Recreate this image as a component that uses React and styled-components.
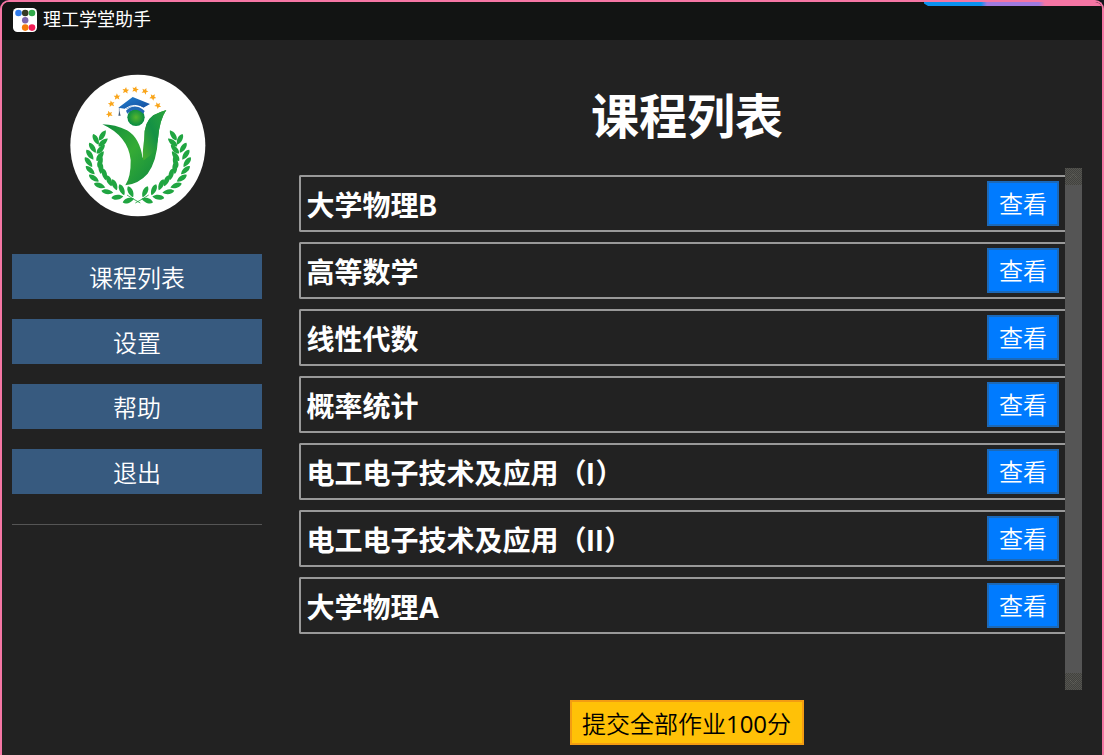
import React from "react";
import styled, { createGlobalStyle } from "styled-components";

const GlobalStyle = createGlobalStyle`
  * { box-sizing: border-box; }
  body {
    margin: 0;
    background: #14161d;
    font-family: "Noto Sans", "Noto Sans CJK SC", sans-serif;
    overflow: hidden;
  }
`;

const Window = styled.div`
  position: relative;
  width: 1104px;
  height: 755px;
  display: flex;
  flex-direction: column;
  border: 2px solid #f576a4;
  border-bottom: 0;
  border-radius: 9px 9px 0 0;
  background: #222222;
  overflow: hidden;
`;

const TitleBar = styled.header`
  flex: none;
  height: 38px;
  display: flex;
  align-items: flex-start;
  gap: 6px;
  padding: 5px 0 0 11px;
  background: #121413;
  color: #fff;
`;

const Title = styled.span`
  font: 400 18px/26px "Noto Sans CJK SC", sans-serif;
  margin-top: -2px;
`;

const Accent = styled.div`
  position: absolute;
  top: -2px;
  right: 0;
  width: 178px;
  height: 6px;
  background: linear-gradient(90deg, #0b92ee 0 57px, #a17be0 63px 115px, #f576a4 121px);
  clip-path: polygon(0 0, 100% 0, 100% 100%, 4px 100%, 0 60%);
`;

const Body = styled.div`
  flex: 1;
  display: flex;
  min-height: 0;
`;

const Sidebar = styled.nav`
  width: 250px;
  margin-left: 10px;
  display: flex;
  flex-direction: column;
  align-items: stretch;
`;

const LogoBox = styled.div`
  display: flex;
  justify-content: center;
  padding: 34px 0 0 1px;
  height: 214px;
`;

const NavButton = styled.button`
  height: 45px;
  flex: none;
  margin: 0 0 20px;
  padding: 0;
  border: 0;
  background: #375a7f;
  color: #fff;
  font: 350 24px/45px "Noto Sans CJK SC", sans-serif;
`;

const Divider = styled.hr`
  width: 100%;
  height: 1px;
  margin: 10px 0 0;
  border: 0;
  background: #555555;
`;

const Main = styled.main`
  width: 783px;
  margin-left: 37px;
  display: flex;
  flex-direction: column;
`;

const Heading = styled.h1`
  height: 128px;
  margin: 0;
  padding: 38px 7px 0 0;
  color: #fff;
  text-align: center;
  font: 700 48px/70px "Noto Sans CJK SC", sans-serif;
`;

const ListArea = styled.section`
  display: flex;
  height: 522px;
`;

const CourseList = styled.div`
  width: 766px;
  padding-top: 7px;
  display: flex;
  flex-direction: column;
  gap: 10px;
`;

const CourseRow = styled.div`
  height: 57px;
  display: flex;
  align-items: center;
  justify-content: space-between;
  padding: 0 6px 0 5.5px;
  border: 2px solid #999999;
  border-right: 0;
  border-radius: 2px 0 0 2px;
`;

const CourseName = styled.span`
  padding-top: 6px;
  color: #fff;
  white-space: nowrap;
  font: 700 28px/45px "Inter", "Noto Sans CJK SC", sans-serif;
`;

const Latin = styled.span`
  letter-spacing: 1px;
`;

const ViewButton = styled.button`
  width: 72px;
  height: 45px;
  margin-top: -1px;
  padding: 0 0 2px 0;
  border: 2px solid #1c69b8;
  background: #007bff;
  color: #fff;
  font: 350 24px/39px "Noto Sans CJK SC", sans-serif;
`;

const ScrollTrack = styled.div`
  width: 17px;
  display: flex;
  flex-direction: column;
  justify-content: space-between;
  background: #555555;
`;

const ScrollArrow = styled.div`
  height: 17px;
  background: repeating-conic-gradient(#42423f 0 25%, #555550 0 50%) 0 0 / 2px 2px;
`;

const SubmitButton = styled.button`
  align-self: center;
  width: 234px;
  height: 45px;
  margin: 10px 7px 0 0;
  padding: 1px 1px 0 0;
  border: 2px solid #f39c12;
  background: #ffc107;
  color: #000;
  white-space: nowrap;
  font: 350 24px/40px "Noto Sans CJK SC", sans-serif;
`;

const Digits = styled.span`
  font-family: "Open Sans", sans-serif;
  font-weight: 400;
`;

const LEAVES = [
  [126, 211, -62], [107, 223, 58], [97, 248, 52], [89, 269, 50], [85, 291, 48],
  [90, 315, 38], [101, 339, 30], [118, 361, 15], [141, 380, 5], [171, 396, -12],
  [204, 406, -25], [128, 232, -45], [121, 252, -52], [119, 273, -58], [119, 291, -75],
  [122, 309, 85], [133, 328, 72], [147, 347, 62], [163, 359, 62], [185, 374, 62], [211, 380, 60],
];

const STARS = [
  [147, 147], [153, 116], [170, 95], [196, 76], [225, 73], [254, 78], [278, 96], [293, 121],
];

const leafPath = "M-18 -1C-11 -10 8 -9 18 2C8 10 -12 10 -18 -1Z";
const starPath = "M0-10 3-3 10-3 5 2 7 9 0 5-7 9-5 2-10-3-3-3Z";

const Laurel = () => (
  <g fill="#20a541">
    {LEAVES.map(([x, y, a]) => (
      <path key={`${x}-${y}`} d={leafPath} transform={`translate(${x} ${y}) rotate(${a})`} />
    ))}
    <path d="M240 414Q218 402 200 390" fill="none" stroke="#20a541" strokeWidth="2.500" />
  </g>
);

const SchoolLogo = () => (
  <svg width="136" height="143" viewBox="29 27 408 429">
    <defs>
      <linearGradient id="body" x1="0" y1="0" x2="1" y2="1">
        <stop offset="0" stopColor="#04843f" />
        <stop offset=".5" stopColor="#35ab35" />
        <stop offset="1" stopColor="#078343" />
      </linearGradient>
      <linearGradient id="wing" x1="0" y1="1" x2="1" y2="0">
        <stop offset="0" stopColor="#4ab02f" />
        <stop offset=".5" stopColor="#149145" />
        <stop offset="1" stopColor="#2ba43c" />
      </linearGradient>
      <linearGradient id="cap" x1="0" y1="0" x2="1" y2="1">
        <stop offset="0" stopColor="#2080d0" />
        <stop offset="1" stopColor="#164d9d" />
      </linearGradient>
      <radialGradient id="head">
        <stop offset="0" stopColor="#56b52d" />
        <stop offset="1" stopColor="#078b43" />
      </radialGradient>
    </defs>
    <ellipse cx="232.500" cy="241.500" rx="202.500" ry="212.500" fill="#fff" />
    <Laurel />
    <g transform="matrix(-1 0 0 1 465 0)"><Laurel /></g>
    {STARS.map(([x, y], i) => (
      <path key={x} d={starPath} fill="#f9a51b" transform={`translate(${x} ${y}) rotate(${-20 + i * 9})`} />
    ))}
    <path d="M126 178Q165 178 200 196Q238 218 247 280Q253 255 252 220Q251 170 279 151Q297 141 318 135Q298 163 293 221Q290 287 262 326Q236 356 195 361Q212 335 211 285Q203 213 126 178Z" fill="url(#body)" />
    <path d="M318 135Q298 163 293 221Q290 260 250 286Q244 274 252 220Q251 170 279 151Q297 141 318 135Z" fill="url(#wing)" />
    <circle cx="227" cy="157" r="26" fill="url(#head)" />
    <path d="M197 137Q224 112 253 138L249 146Q225 123 201 146Z" fill="#2168b4" />
    <path d="M174 128 217 96 269 117 249 128Q223 113 198 132Z" fill="url(#cap)" />
    <path d="M194 132Q223 110 254 133" fill="none" stroke="#fff" strokeWidth="3" />
    <path d="M177 128 177 143" stroke="#355b83" strokeWidth="1.500" />
    <path d="M177 137 174 152 181 152Z" fill="#445d78" />
  </svg>
);

const AppIcon = () => (
  <svg width="24" height="25" viewBox="0 0 24 25">
    <rect x="0" y="1" width="24" height="24" rx="4.500" fill="#fff" />
    <circle cx="5.500" cy="6" r="3.300" fill="#307cec" />
    <circle cx="12.200" cy="6" r="3.300" fill="#353a26" />
    <circle cx="19" cy="6" r="3.300" fill="#32aa4b" />
    <circle cx="12.200" cy="13.300" r="3.200" fill="#7d65ae" />
    <circle cx="12.200" cy="20.600" r="3.300" fill="#f57c0b" />
    <circle cx="19" cy="20.600" r="3.300" fill="#f01b55" />
  </svg>
);

const ArrowDots = ({ down }) => (
  <svg width="17" height="17" viewBox="0 0 17 17">
    <path d={down ? "M5 7 8.500 11 12 7" : "M5 10 8.500 6 12 10"} fill="none" stroke="#6c6c65" strokeDasharray="1 1" />
  </svg>
);

const navItems = ["课程列表", "设置", "帮助", "退出"];
const courses = [
  "大学物理B", "高等数学", "线性代数", "概率统计",
  "电工电子技术及应用（I）", "电工电子技术及应用（II）", "大学物理A",
];

export default function App() {
  return (
    <>
      <GlobalStyle />
      <Window>
        <TitleBar>
          <AppIcon />
          <Title>理工学堂助手</Title>
        </TitleBar>
        <Accent />
        <Body>
          <Sidebar>
            <LogoBox><SchoolLogo /></LogoBox>
            {navItems.map((item) => <NavButton key={item}>{item}</NavButton>)}
            <Divider />
          </Sidebar>
          <Main>
            <Heading>课程列表</Heading>
            <ListArea>
              <CourseList>
                {courses.map((name) => (
                  <CourseRow key={name}>
                    <CourseName>
                      {name.split(/([A-Z]+)/).map((part, i) => (i % 2 ? <Latin key={i}>{part}</Latin> : part))}
                    </CourseName>
                    <ViewButton>查看</ViewButton>
                  </CourseRow>
                ))}
              </CourseList>
              <ScrollTrack>
                <ScrollArrow><ArrowDots /></ScrollArrow>
                <ScrollArrow><ArrowDots down /></ScrollArrow>
              </ScrollTrack>
            </ListArea>
            <SubmitButton>提交全部作业<Digits>100</Digits>分</SubmitButton>
          </Main>
        </Body>
      </Window>
    </>
  );
}
